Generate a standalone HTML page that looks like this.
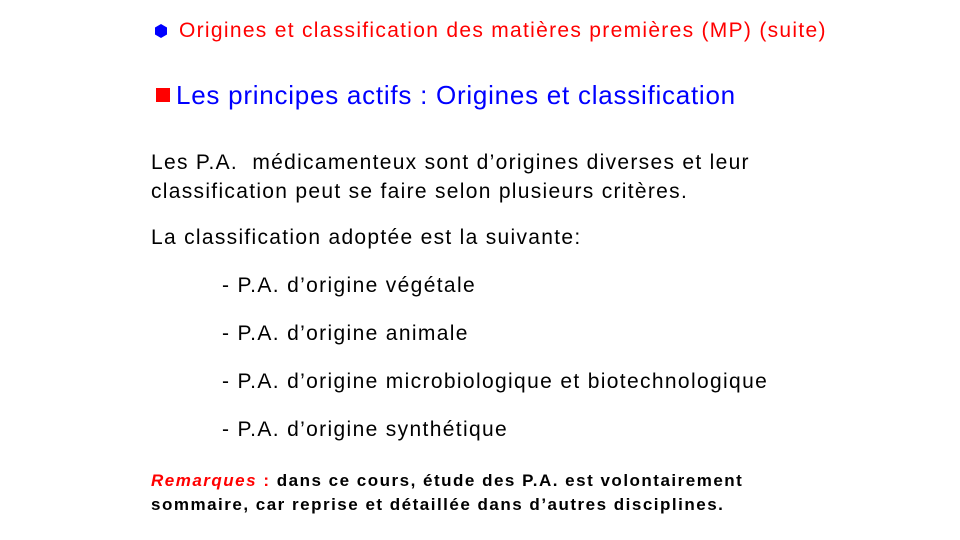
<!DOCTYPE html>
<html><head><meta charset="utf-8"><style>
body{margin:0;width:960px;height:540px;background:#fff;position:relative;overflow:hidden;font-family:"Liberation Sans",sans-serif;}
div{position:absolute;white-space:nowrap;}
</style></head><body>
<svg style="position:absolute;left:153px;top:23px" width="16" height="16"><polygon points="8,1 14,4.5 14,11.5 8,15 2,11.5 2,4.5" fill="#0000ff"/></svg>
<div style="left:179px;top:19px;font-size:21px;letter-spacing:1.3px;color:#ff0000">Origines et classification des matières premières (MP) (suite)</div>
<div style="left:156px;top:88px;width:14px;height:14px;background:#ff0000"></div>
<div style="left:176px;top:80px;font-size:26px;letter-spacing:0.75px;color:#0000ff">Les principes actifs : Origines et classification</div>
<div style="left:151px;top:148px;font-size:21px;letter-spacing:1.3px;line-height:29px;color:#000">Les P.A.&nbsp; médicamenteux sont d’origines diverses et leur<br>classification peut se faire selon plusieurs critères.</div>
<div style="left:151px;top:226px;font-size:21px;letter-spacing:1.3px;color:#000">La classification adoptée est la suivante:</div>
<div style="left:222px;top:274px;font-size:21px;letter-spacing:1.35px;color:#000">- P.A. d’origine végétale</div>
<div style="left:222px;top:322px;font-size:21px;letter-spacing:1.35px;color:#000">- P.A. d’origine animale</div>
<div style="left:222px;top:370px;font-size:21px;letter-spacing:1.35px;color:#000">- P.A. d’origine microbiologique et biotechnologique</div>
<div style="left:222px;top:418px;font-size:21px;letter-spacing:1.35px;color:#000">- P.A. d’origine synthétique</div>
<div style="left:151px;top:469px;font-size:17px;letter-spacing:1.5px;line-height:24px;font-weight:bold;color:#000"><i style="color:#ff0000">Remarques</i> <span style="color:#ff0000">:</span> dans ce cours, étude des P.A. est volontairement<br>sommaire, car reprise et détaillée dans d’autres disciplines.</div>
</body></html>
